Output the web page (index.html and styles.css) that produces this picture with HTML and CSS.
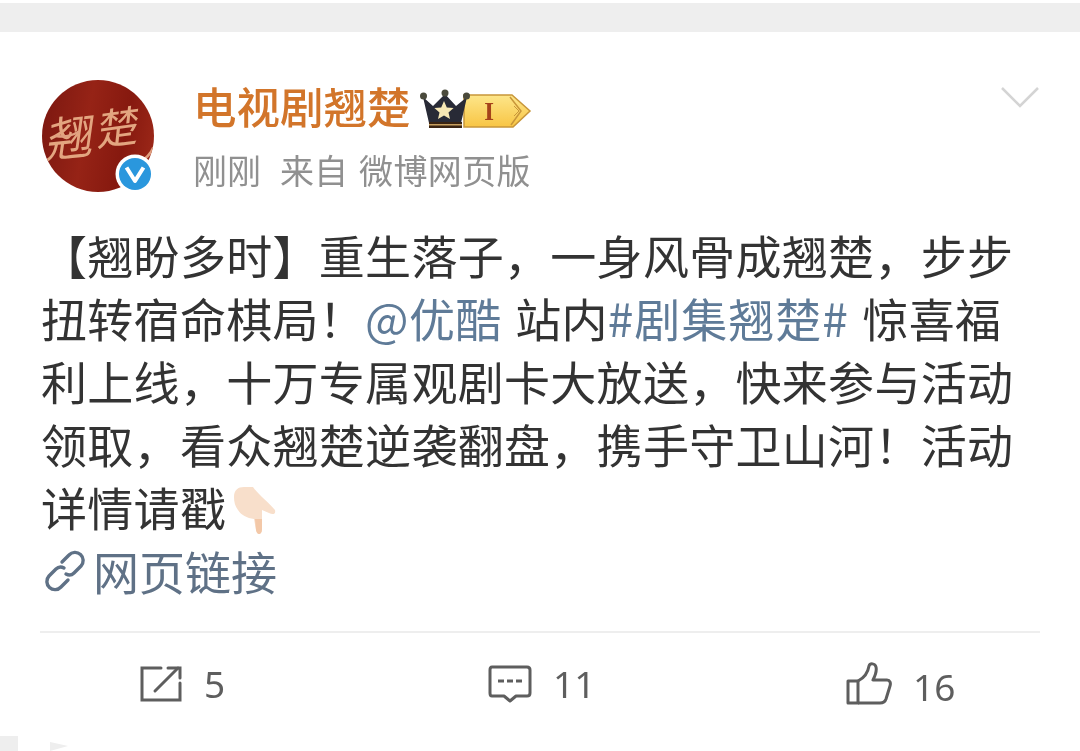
FILE: index.html
```html
<!DOCTYPE html>
<html lang="zh-CN">
<head>
    <meta charset="UTF-8">
    <meta name="viewport" content="width=device-width, initial-scale=1.0">
    <title>电视剧翘楚</title>
    <link rel="stylesheet" href="styles.css">
</head>
<body>
    <div class="top-band"></div>
    <div class="post">
        <div class="post-head">
            <div class="avatar">
                <div class="avatar-disc">
                    <span class="avatar-word first">翘</span>
                    <span class="avatar-word second">楚</span>
                    <svg class="brush" width="112" height="112" viewBox="0 0 112 112">
                        <path d="M14 56 Q26 58 36 52 M96 84 Q108 76 111 68" fill="none" stroke="#e0a080" stroke-width="2.5" stroke-linecap="round"/>
                    </svg>
                </div>
                <svg class="verified" width="40" height="40" viewBox="0 0 40 40">
                    <circle cx="20" cy="20" r="19.5" fill="#fff"/>
                    <circle cx="20" cy="20" r="16" fill="#2a97dd"/>
                    <path d="M11.5 13.5 L20 27 L28.5 13.5" fill="none" stroke="#fff" stroke-width="4" stroke-linejoin="round"/>
                </svg>
            </div>
            <div class="who">
                <div class="name-row">
                    <span class="name">电视剧翘楚</span>
                    <svg class="rank" width="112" height="44" viewBox="0 0 112 44">
                        <defs>
                            <linearGradient id="rank-fill" x1="0" y1="0" x2="0" y2="1">
                                <stop offset="0" stop-color="#fde68a"/>
                                <stop offset="1" stop-color="#f8c544"/>
                            </linearGradient>
                        </defs>
                        <path d="M44 7 H92 L110 23 L93 39 H44 Z" fill="url(#rank-fill)" stroke="#c8963a" stroke-width="1.5"/>
                        <path d="M90 9 L101 23 L91 37" fill="none" stroke="#c8963a" stroke-width="1.5"/>
                        <path d="M94 18 L99 23 L94 28" fill="none" stroke="#c8963a" stroke-width="1"/>
                        <text x="69" y="32" class="rank-letter">I</text>
                        <path d="M3 9 L13 18 L25 6 L36 18 L47 9 L41 35 H9 Z" fill="#282a36"/>
                        <rect x="9" y="34" width="33" height="6" fill="#3a2412"/>
                        <rect x="9" y="36" width="33" height="1.5" fill="#c8a060"/>
                        <circle cx="3.5" cy="8" r="3.5" fill="#4a4a3c"/>
                        <circle cx="25" cy="5" r="3.5" fill="#4a4a3c"/>
                        <circle cx="46.5" cy="8" r="3.5" fill="#4a4a3c"/>
                        <path d="M24 13 L26.8 19.4 L33.6 20 L28.5 24.5 L30 31 L24 27.6 L18 31 L19.5 24.5 L14.4 20 L21.2 19.4 Z" fill="#f6e7b4"/>
                    </svg>
                </div>
                <div class="meta"><span>刚刚</span><span class="from">来自</span><span class="client">微博网页版</span></div>
            </div>
            <svg class="fold" width="40" height="24" viewBox="0 0 40 24">
                <path d="M2 2 L20 20 L38 2" fill="none" stroke="#d4d4d4" stroke-width="2.5"/>
            </svg>
        </div>
        <div class="post-text">
            <p>【翘盼多时】重生落子，一身风骨成翘楚，步步扭转宿命棋局！<a class="blue">@优酷</a> 站内<a class="blue topic">#剧集翘楚#</a> 惊喜福利上线，十万专属观剧卡大放送，快来参与活动领取，看众翘楚逆袭翻盘，携手守卫山河！活动详情请戳<svg class="hand" width="46" height="50" viewBox="0 0 46 50">
                <path d="M3 12 C3 5 7 2 13 2 L22 2 C26 8 34 14 44 25 C45 29 42 30 38 28 L31 25 L31 44 C31 50 26 51 25 45 L23 34 C16 33 10 30 7 25 C4 21 3 17 3 12 Z" fill="#f8dfcb"/>
                <path d="M24 34 L31 34 L31 44 C31 50 26 51 25 45 Z" fill="#f3c8a8"/>
            </svg></p>
            <a class="web-link">
                <svg width="42" height="42" viewBox="0 0 42 42">
                    <g fill="none" stroke="#5f7186" stroke-width="3.4" stroke-linecap="round">
                        <path d="M18 12 L25 5 A6.6 6.6 0 0 1 37 16 L30 23 A6.6 6.6 0 0 1 22 24"/>
                        <path d="M24 30 L17 37 A6.6 6.6 0 0 1 5 26 L12 19 A6.6 6.6 0 0 1 20 18"/>
                    </g>
                </svg>网页链接
            </a>
        </div>
        <div class="actions">
            <div class="action share">
                <svg width="46" height="38" viewBox="0 0 46 38">
                    <g fill="none" stroke="#5e5e5e" stroke-width="3" stroke-linecap="round">
                        <path d="M22 3 H3 V35 H41 V18"/>
                        <path d="M16 26 L39 3"/>
                        <path d="M29 3 H41 V13"/>
                    </g>
                </svg>
                <span>5</span>
            </div>
            <div class="action comment">
                <svg width="44" height="38" viewBox="0 0 44 38">
                    <path d="M4 2 H39 Q42 2 42 5 V28 Q42 31 39 31 H28 L22 36 L16 31 H4 Q2 31 2 28 V5 Q2 2 4 2 Z" fill="none" stroke="#5e5e5e" stroke-width="3" stroke-linejoin="round"/>
                    <path d="M10 16 H16 M19 16 H25 M28 16 H34" stroke="#5e5e5e" stroke-width="3"/>
                </svg>
                <span>11</span>
            </div>
            <div class="action like">
                <svg width="46" height="44" viewBox="0 0 46 44">
                    <g fill="none" stroke="#5e5e5e" stroke-width="3" stroke-linejoin="round">
                        <path d="M2 19 H12 V41 H2 Z"/>
                        <path d="M12 19 C18 16 22 10 23 4 C24 1 29 1 30 5 C31 9 29 14 27 18 H41 C44 18 45 21 44 24 L40 37 C39 40 37 41 34 41 H12"/>
                    </g>
                </svg>
                <span>16</span>
            </div>
        </div>
    </div>
    <div class="bottom-marks">
        <div class="tab-left"></div>
        <div class="tab-arrow"></div>
    </div>
</body>
</html>
```

FILE: styles.css
```css
body {
    margin: 0;
    padding-top: 3px;
    background-color: #fff;
    font-family: "Noto Sans CJK SC", "Noto Sans", sans-serif;
    color: #333;
    height: 748px;
    overflow: hidden;
    position: relative;
}
.top-band {
    height: 29px;
    background-color: #eeeeee;
}
.post {
    padding: 48px 40px 0 41px;
    filter: blur(0.45px);
}
.post-head {
    display: flex;
    align-items: flex-start;
    height: 112px;
}
.avatar {
    position: relative;
    width: 112px;
    height: 112px;
    margin-left: 1px;
    flex: none;
}
.avatar-disc {
    width: 112px;
    height: 112px;
    border-radius: 50%;
    background: linear-gradient(100deg, #7a1710, #962316 40%, #86190f 70%, #a02a1a);
    overflow: hidden;
    position: relative;
}
.avatar-word {
    position: absolute;
    color: #e3a580;
    font-size: 48px;
    line-height: 1;
}
.avatar-word.first {
    left: 6px;
    top: 30px;
    transform: rotate(-6deg) skewX(-14deg);
}
.avatar-word.second {
    left: 56px;
    top: 24px;
    font-size: 42px;
    transform: rotate(-8deg) skewX(-14deg);
}
.brush {
    position: absolute;
    left: 0;
    top: 0;
}
.verified {
    position: absolute;
    left: 73px;
    top: 74px;
}
.who {
    margin-left: 39px;
    flex: 1;
}
.name-row {
    display: flex;
    align-items: center;
    height: 52px;
}
.name {
    font-size: 43.5px;
    line-height: 52px;
    color: #d2752a;
    font-weight: 500;
}
.rank {
    margin-left: 9px;
    margin-top: 8px;
    flex: none;
}
.rank-letter {
    font-family: "Liberation Serif", serif;
    font-weight: 700;
    font-size: 25px;
    fill: #a5421a;
    text-anchor: middle;
}
.meta {
    margin-top: 14px;
    font-size: 34px;
    line-height: 48px;
    color: #909090;
}
.meta .from {
    margin-left: 19px;
}
.meta .client {
    margin-left: 11px;
    letter-spacing: 0.4px;
}
.fold {
    flex: none;
    margin-top: 6px;
}
.post-text {
    margin-top: 31px;
    font-size: 46px;
    line-height: 63px;
    letter-spacing: 0.3px;
}
.post-text p {
    margin: 0;
    color: #333;
    word-spacing: 3px;
}
.blue {
    color: #5f7b98;
}
.topic {
    letter-spacing: 1px;
}
.hand {
    vertical-align: -9px;
    margin-left: 5px;
}
.web-link {
    display: flex;
    align-items: center;
    height: 65px;
    color: #5f7186;
    letter-spacing: 0;
}
.web-link svg {
    margin-right: 7px;
    margin-left: 3px;
}
.actions {
    display: flex;
    align-items: flex-start;
    margin: 28px 0 0 -1px;
    padding-left: 99px;
    height: 80px;
    border-top: 2px solid #eeeeee;
}
.action {
    display: flex;
    align-items: center;
    margin-top: 25px;
    font-size: 37px;
    color: #5e5e5e;
    font-family: "Noto Sans", sans-serif;
}
.action.share {
    width: 349px;
}
.action.share span {
    margin-left: 19px;
}
.action.comment {
    width: 358px;
}
.action.comment span {
    margin-left: 21px;
}
.action.like {
    margin-top: 22px;
}
.action.like span {
    margin-left: 21px;
    margin-top: 6px;
}
.bottom-marks .tab-left {
    position: absolute;
    left: 0;
    top: 736px;
    width: 18px;
    height: 15px;
    background-color: #eeeeee;
}
.bottom-marks .tab-arrow {
    position: absolute;
    left: 50px;
    top: 742px;
    border-left: 18px solid #eeeeee;
    border-top: 4px solid transparent;
    border-bottom: 5px solid transparent;
}
```
